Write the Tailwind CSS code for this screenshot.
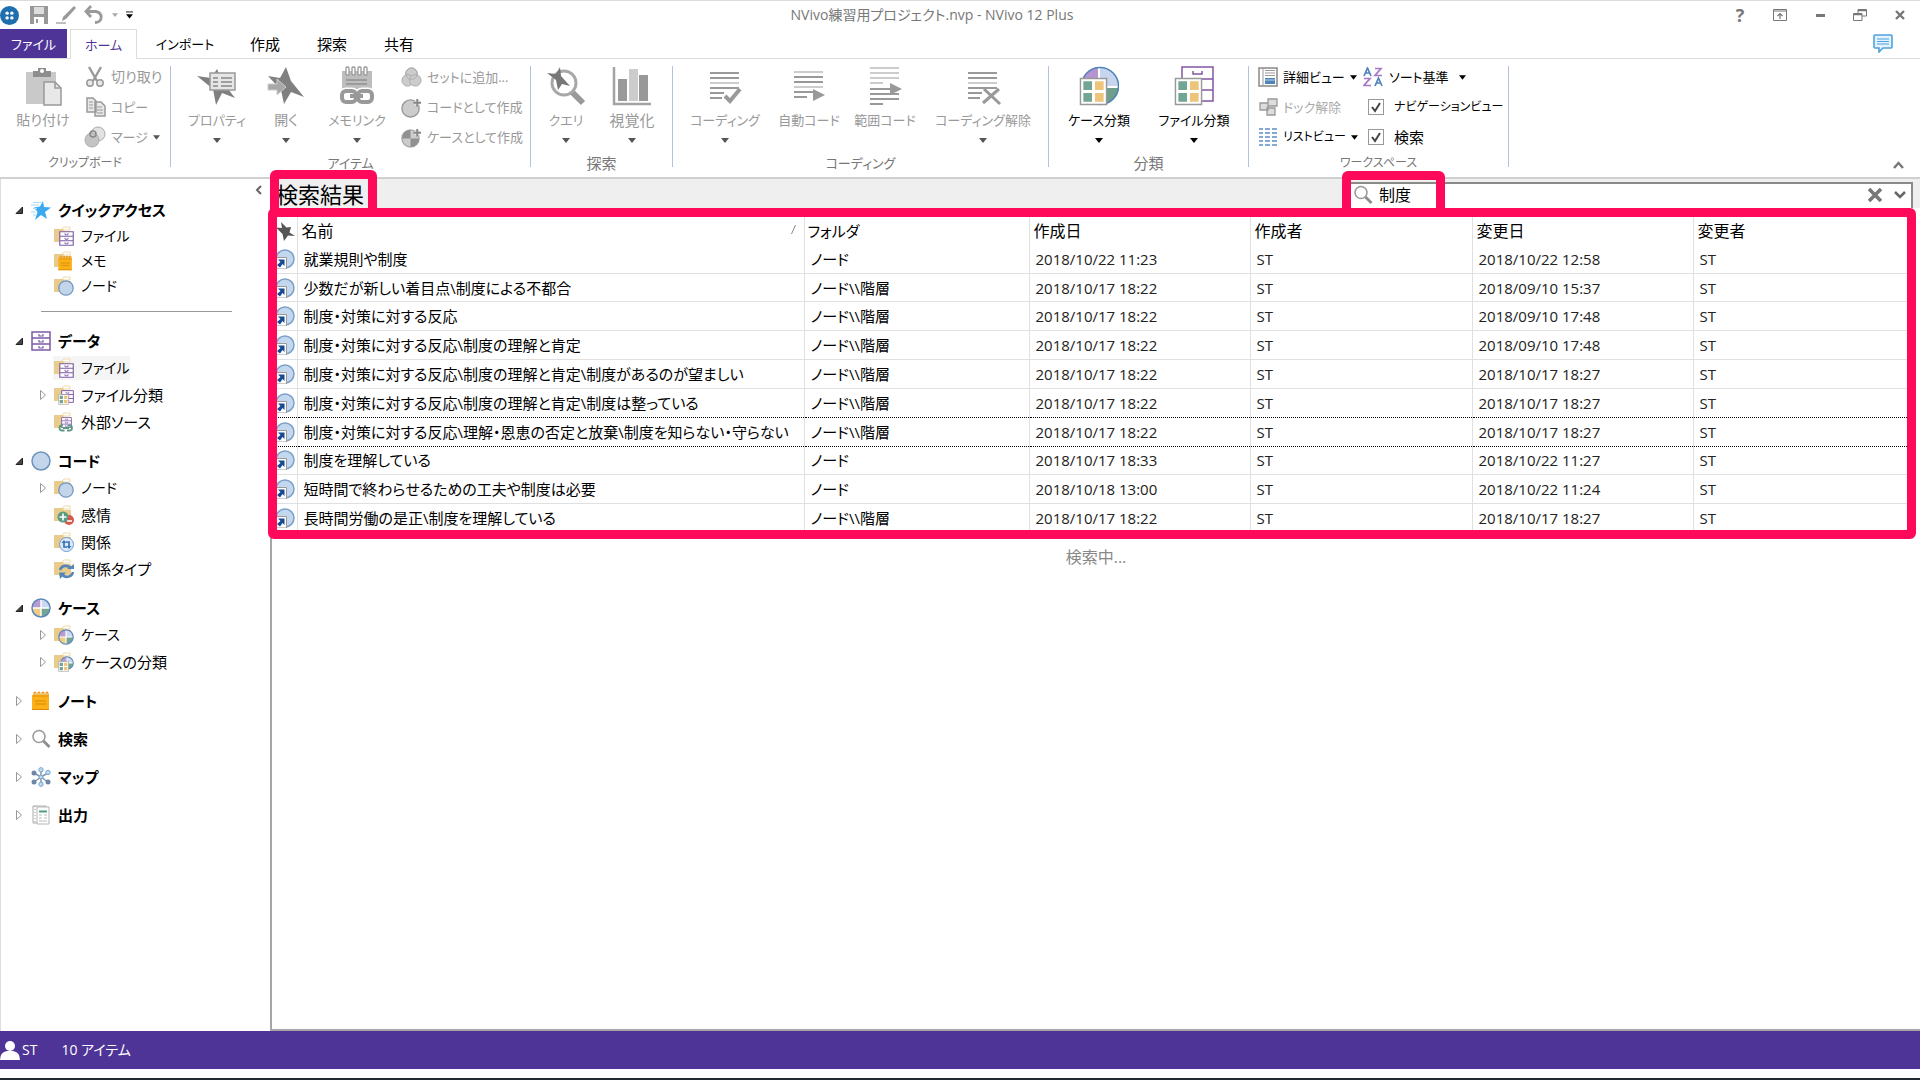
<!DOCTYPE html>
<html lang="ja">

<head>
    <meta charset="UTF-8">
    <meta name="viewport" content="width=device-width, initial-scale=1.0">
    <title>NVivo練習用プロジェクト.nvp - NVivo 12 Plus</title>
    <script src="https://cdn.jsdelivr.net/npm/@tailwindcss/browser@4"></script>
</head>

<body class="h-screen flex flex-col overflow-hidden bg-white text-[15px] leading-5 text-black font-['Open_Sans','Noto_Sans_CJK_JP',sans-serif] [font-feature-settings:'palt'] whitespace-nowrap">
    <!-- icon sprite -->
    <svg class="hidden">
        <symbol id="folder" viewBox="0 0 20 20">
            <path d="M8 3l2-2h6v3h-6z" fill="#fff" stroke="#f0d9a8" />
            <path d="M0 3h9l1 2h7v11H0z" fill="#e9cc8c" />
        </symbol>
        <symbol id="cabinet" viewBox="0 0 20 20">
            <path d="M1 1h18v18H1zM1 7h18M1 13h18" fill="#fff" stroke="#7d5ba6" stroke-width="1.5" />
            <path d="M8 3v2h4V3M8 9v2h4V9M8 15v2h4v-2" fill="none" stroke="#7d5ba6" stroke-width="1.2" />
        </symbol>
        <symbol id="node" viewBox="0 0 20 20">
            <circle cx="10" cy="10" r="9" fill="#c3d5ea" stroke="#6d93bd" stroke-width="1.5" />
        </symbol>
        <symbol id="pie" viewBox="0 0 20 20">
            <circle cx="10" cy="10" r="9" fill="#c9daf0" />
            <path d="M10 10V1a9 9 0 0 0-9 9z" fill="#b99bd3" />
            <path d="M10 10H1a9 9 0 0 0 9 9z" fill="#f0cd84" />
            <path d="M10 10v9a9 9 0 0 0 9-9z" fill="#74a493" />
            <path d="M10 1v18M1 10h18" stroke="#fff" stroke-width="1.4" />
            <circle cx="10" cy="10" r="9" fill="none" stroke="#5b87b8" stroke-width="1.5" />
        </symbol>
        <symbol id="memo" viewBox="0 0 20 20">
            <path d="M1 4h17v15H1z" fill="#fbb117" />
            <path d="M3 6V2q2-2 2 1v3M7 6V2q2-2 2 1v3M11 6V2q2-2 2 1v3M15 6V2q2-2 2 1v3" fill="none" stroke="#e8960c" stroke-width="1.2" />
            <path d="M4 10h11M4 13h11M1 18.500h17" stroke="#d98a06" />
        </symbol>
        <symbol id="grid" viewBox="0 0 20 20">
            <path d="M1 1h18v18H1z" fill="#fff" stroke="#999" />
            <path d="M3 3h6v6H3zM3 11h6v6H3z" fill="#72a594" />
            <path d="M11 3h6v6h-6zM11 11h6v6h-6z" fill="#ecc57b" />
        </symbol>
        <symbol id="lens" viewBox="0 0 20 20">
            <circle cx="8" cy="7.500" r="6" fill="none" stroke="#9b9b9b" stroke-width="1.6" />
            <path d="M12.500 12l6 6" stroke="#8d8d8d" stroke-width="2.8" />
        </symbol>
        <symbol id="f-file" viewBox="0 0 20 20">
            <use href="#folder" /><use href="#cabinet" x="5" y="5" width="15" height="15" />
        </symbol>
        <symbol id="f-memo" viewBox="0 0 20 20">
            <use href="#folder" /><use href="#memo" x="3" y="4" width="17" height="16" />
        </symbol>
        <symbol id="f-node" viewBox="0 0 20 20">
            <use href="#folder" /><use href="#node" x="4" y="4" width="16" height="16" />
        </symbol>
        <symbol id="f-class" viewBox="0 0 20 20">
            <use href="#folder" /><use href="#cabinet" x="7" y="5" width="13" height="13" /><use href="#grid" x="4" y="9" width="11" height="11" />
        </symbol>
        <symbol id="f-ext" viewBox="0 0 20 20">
            <use href="#folder" /><use href="#cabinet" x="6" y="5" width="13" height="11" />
            <path d="M9 13.500h-1a2.500 2.500 0 0 0 0 5h2.500M14 13.500h1.500a2.500 2.500 0 0 1 0 5H13M9 16h6" fill="none" stroke="#5d9a84" stroke-width="1.8" />
        </symbol>
        <symbol id="f-senti" viewBox="0 0 20 20">
            <use href="#folder" />
            <circle cx="15" cy="15" r="5" fill="#d9574a" /><path d="M13 16h5" stroke="#fff" stroke-width="1.6" />
            <circle cx="9" cy="12" r="5.500" fill="#5a9b84" /><path d="M5.500 12h7M9 8.500v7" stroke="#fff" stroke-width="1.6" />
        </symbol>
        <symbol id="f-rel" viewBox="0 0 20 20">
            <use href="#folder" />
            <circle cx="12.500" cy="12.500" r="7" fill="#dce9f7" stroke="#6d9ad0" />
            <path d="M10 9v6h3M15 16v-6h-3" fill="none" stroke="#3674b9" stroke-width="1.7" /><path d="M7.500 11L10 8l2.500 3zM12.500 14l2.500 3 2.500-3z" fill="#3674b9" />
        </symbol>
        <symbol id="f-reltype" viewBox="0 0 20 20">
            <use href="#folder" />
            <path d="M6 11a6 6 0 0 1 11-1M19 13a6 6 0 0 1-11 2" fill="none" stroke="#5585b8" stroke-width="2.6" /><path d="M13 10h7V5zM5 13.500h7L6 20z" fill="#5585b8" />
        </symbol>
        <symbol id="f-case" viewBox="0 0 20 20">
            <use href="#folder" /><use href="#pie" x="4" y="4" width="16" height="16" />
        </symbol>
        <symbol id="f-caseclass" viewBox="0 0 20 20">
            <use href="#folder" /><use href="#pie" x="6" y="4" width="14" height="14" /><use href="#grid" x="4" y="9" width="11" height="11" />
        </symbol>
        <symbol id="star" viewBox="0 0 20 20">
            <path d="M12 1l1 6 7 .500-6 4.500 2 7-6-4-6 5 2.500-8L3 7.500l6-1z" fill="#3aa9ef" />
            <path d="M2 2.500h8M0 5h8M2 8.500h4M0 12h5M2 15h3" stroke="#a5dafa" stroke-width="1.200" />
        </symbol>
        <symbol id="map" viewBox="0 0 20 20">
            <path d="M10 10V3M10 10v7M10 10L3 6M10 10l7-4M10 10l-7 5M10 10l7 5" stroke="#8394aa" stroke-width="1.500" />
            <g fill="#6d86a8"><circle cx="3" cy="6" r="2.500" /><circle cx="3" cy="15" r="2.500" /><circle cx="17" cy="15" r="2.500" /></g>
            <g fill="#b9dcf6" stroke="#7ba5d0"><circle cx="10" cy="2.800" r="2.200" /><circle cx="17" cy="5.500" r="2.200" /><circle cx="10" cy="17.200" r="2.200" /><circle cx="10" cy="10" r="2" /></g>
        </symbol>
        <symbol id="report" viewBox="0 0 20 20">
            <path d="M2 1h13v17H2z" fill="#fff" stroke="#aaa" /><path d="M4 1v17" stroke="#999" stroke-dasharray="1 2" />
            <path d="M6 2h12v17H6z" fill="#fff" stroke="#b5b5b5" /><path d="M8 6.500h8" stroke="#4e9c80" stroke-width="2" />
            <path d="M8 10h3M13 10h3M8 13h3M13 13h3M8 16h8" stroke="#bbb" />
        </symbol>
        <symbol id="shortcut" viewBox="0 0 20 20">
            <circle cx="10" cy="10" r="9" fill="#c3d8ee" stroke="#7ba0c8" stroke-width="1.500" />
            <path d="M0 8.500h11.500V20H0z" fill="#fff" stroke="#999" /><path d="M3 10.500h6.500V17l-2-2-2.500 3.500L2 16l3.500-3z" fill="#174a94" />
        </symbol>
        <symbol id="pin" viewBox="0 0 20 20">
            <path d="M6 1l5.500 5.500L16 6l-1.500 5.500L20 15l-7-.500L9 20l-1.500-7L1 6.500l6 .500z" fill="#555" />
        </symbol>
        <symbol id="down" viewBox="0 0 8 5"><path d="M0 0h8L4 5z" fill="currentColor" /></symbol>
        <symbol id="opened" viewBox="0 0 10 12"><path d="M8.500 3v6.500H2z" fill="#444" stroke="#222" /></symbol>
        <symbol id="closed" viewBox="0 0 10 12"><path d="M2.500 1.500l5 4.500-5 4.500z" fill="#fff" stroke="#999" /></symbol>
    </svg>

    <!-- title bar -->
    <header class="flex h-[29px] shrink-0 items-center border-t border-[#dcdcdc] text-[#777]">
        <div class="flex w-36 items-center text-[#999]">
            <svg class="size-[19px] mr-[11px]" viewBox="0 0 20 20"><circle cx="10" cy="10" r="10" fill="#1d6fae" /><g fill="#fff"><circle cx="7.500" cy="7.500" r="1.800" /><circle cx="12.500" cy="7.500" r="1.800" /><circle cx="7.500" cy="12.500" r="1.800" /><circle cx="12.500" cy="12.500" r="1.800" /></g></svg>
            <button type="button" aria-label="保存" class="mr-2"><svg class="size-[18px]" viewBox="0 0 18 18"><path d="M0 0h18v18H0z" fill="#989898" /><path d="M4 1h10v7H4zM4 11h10v7H4z" fill="#fff" /><path d="M6 13h2v4H6z" fill="#989898" /><path d="M4 1h10v7H4z" fill="#ddd" /></svg></button>
            <button type="button" aria-label="編集" class="mr-2"><svg class="size-5" viewBox="0 0 20 20"><path d="M18 1l2 2L10 14l-4 2 1-4z" fill="#999" /><path d="M0 18h10" stroke="#aaa" stroke-width="1.500" /></svg></button>
            <button type="button" aria-label="元に戻す" class="mr-2"><svg class="size-5" viewBox="0 0 20 20"><path d="M7 1L2 6.500 7 12M2 6.500h10q6 1 5 7-1 4-6 4" fill="none" stroke="#999" stroke-width="2.800" /></svg></button>
            <svg class="w-[6px] h-1 mr-2 text-[#aaa]"><use href="#down" /></svg>
            <svg class="w-[7px] h-2 text-black" viewBox="0 0 8 8"><path d="M0 .500h8" stroke="#000" /><path d="M0 3h8L4 8z" /></svg>
        </div>
        <h1 class="flex-1 text-center text-sm">NVivo練習用プロジェクト.nvp - NVivo 12 Plus</h1>
        <div class="flex">
            <button type="button" class="w-10 font-bold text-lg">?</button>
            <button type="button" aria-label="リボン表示" class="w-10 flex justify-center items-center"><svg class="w-[14px] h-3" viewBox="0 0 14 12" fill="none" stroke="#777"><path d="M.500 .500h13v11H.500zM.500 2h13" /><path d="M7 10V5M4.500 7L7 4.500 9.500 7" stroke-width="1.200" /></svg></button>
            <button type="button" aria-label="最小化" class="w-10 flex justify-center items-center"><svg class="w-[9px] h-[3px]" viewBox="0 0 9 3"><path d="M0 0h9v3H0z" fill="#777" /></svg></button>
            <button type="button" aria-label="元に戻す" class="w-10 flex justify-center items-center"><svg class="w-[14px] h-3" viewBox="0 0 14 12" fill="none" stroke="#777"><path d="M5 4V.500h8.500V7H9M.500 4.500H9v7H.500z" /><path d="M5 1.500h8.500M.500 5.500H9" stroke-width="1.500" /></svg></button>
            <button type="button" aria-label="閉じる" class="w-10 flex justify-center items-center"><svg class="size-[10px]" viewBox="0 0 10 10"><path d="M1 1l8 8M9 1L1 9" stroke="#777" stroke-width="2.400" /></svg></button>
        </div>
    </header>

    <!-- ribbon tabs -->
    <nav class="flex h-[30px] shrink-0 items-stretch border-b border-[#dcdcdc]">
        <button type="button" class="w-[67px] bg-[#4e3496] text-[13px] text-white">ファイル</button>
        <button type="button" class="ml-[3px] w-[67px] h-[30px] border border-b-0 border-[#dcdcdc] bg-white text-[13px] text-[#4e3496]">ホーム</button>
        <button type="button" class="w-24 text-[13px]">インポート</button>
        <button type="button" class="w-16">作成</button>
        <button type="button" class="w-[70px]">探索</button>
        <button type="button" class="w-16">共有</button>
        <button type="button" aria-label="フィードバック" class="ml-auto mr-[27px]"><svg class="w-5 h-[19px]" viewBox="0 0 20 19"><path d="M2 1h16q1 0 1 1v11q0 1-1 1h-8l-4 4v-4H2q-1 0-1-1V2q0-1 1-1z" fill="#e4f2fc" stroke="#4da2dd" stroke-width="1.600" /><path d="M4 5h12M4 7.500h12M4 10h12" stroke="#4da2dd" stroke-width="1.200" /></svg></button>
    </nav>

    <!-- ribbon -->
    <div class="flex h-[120px] shrink-0 items-start border-b-2 border-[#d0d0d0] pt-[7px] text-[13px] leading-5 text-[#999]">
        <section class="flex w-[171px] h-[101px] shrink-0 flex-col border-r border-[#b3c2dd]">
            <div class="flex h-[87px] shrink-0 gap-[9px] pl-[11px]">
                <button type="button" class="flex w-16 shrink-0 flex-col items-center">
                    <svg class="size-10" viewBox="0 0 40 40"><path d="M3 6h30v32H3z" fill="#c9c9c9" /><path d="M10 5h5V2h8v3h5v6H10z" fill="#8e8e8e" /><circle cx="19" cy="5" r="2" fill="#fff" /><path d="M21 16h11l6 6v17H21z" fill="#e8e8e8" stroke="#999" stroke-width="1.500" /><path d="M32 16v6h6" fill="none" stroke="#999" stroke-width="1.500" /></svg>
                    <span class="mt-1 text-sm leading-5">貼り付け</span>
                    <svg class="w-2 h-[5px] mt-2 text-[#555]"><use href="#down" /></svg>
                </button>
                <div class="-mt-1 flex flex-col">
                    <button type="button" class="flex h-[30px] items-center gap-[5px] text-sm"><svg class="size-[22px]" viewBox="0 0 22 22"><path d="M5 1l8 14M17 1L9 15" stroke="#999" stroke-width="2.400" /><g fill="#e8e8e8" stroke="#999" stroke-width="1.500"><circle cx="6" cy="17" r="3.200" /><circle cx="16" cy="17" r="3.200" /></g></svg>切り取り</button>
                    <button type="button" class="flex h-[30px] items-center gap-[5px]"><svg class="size-[22px]" viewBox="0 0 22 22" fill="#e8e8e8" stroke="#999" stroke-width="1.500"><path d="M3 2h6l3 3v11H3zM11 6h6l4 4v10H11z" /><path d="M5 6h4M5 9h4M5 12h4M13 11h5M13 14h6M13 17h6" stroke-width="1" /></svg>コピー</button>
                    <button type="button" class="flex h-[30px] items-center gap-[5px]"><svg class="size-[22px]" viewBox="0 0 22 22" stroke="#aaa"><circle cx="14" cy="8" r="7" fill="#e2e2e2" /><circle cx="8" cy="14" r="7" fill="#c4c4c4" /><circle cx="9" cy="8" r="3" fill="none" stroke="#888" stroke-width="1.500" /></svg>マージ<svg class="w-[7px] h-[5px] text-[#555]"><use href="#down" /></svg></button>
                </div>
            </div>
            <p class="text-center text-xs leading-5 text-[#777]">クリップボード</p>
        </section>
        <section class="flex w-[360px] h-[101px] shrink-0 flex-col border-r border-[#b3c2dd]">
            <div class="flex h-[87px] shrink-0 pl-[11px]">
                <button type="button" class="flex w-[70px] shrink-0 flex-col items-center">
                    <svg class="size-10" viewBox="0 0 40 40"><path d="M20 3l5 12 13 17-13-5-6 12-3-16L0 10l14 2z" fill="#808080" /><path d="M13 7h25v17H13z" fill="#e6e6e6" stroke="#999" stroke-width="1.500" /><path d="M16 12h5M16 16h5M16 20h5M24 12h11M24 16h11M24 20h11" stroke="#888" stroke-width="1.600" /></svg>
                    <span class="mt-1">プロパティ</span>
                    <svg class="w-2 h-[5px] mt-2 text-[#555]"><use href="#down" /></svg>
                </button>
                <button type="button" class="flex w-[68px] shrink-0 flex-col items-center">
                    <svg class="size-10" viewBox="0 0 40 40"><path d="M20 1l5 14 13 16-13-5-7 12-3-14L2 10l12 2z" fill="#808080" /><path d="M2 18h9v-5l9 8-9 8v-5H2z" fill="#a8a8a8" stroke="#ccc" /></svg>
                    <span class="mt-1 text-sm leading-5">開く</span>
                    <svg class="w-2 h-[5px] mt-2 text-[#555]"><use href="#down" /></svg>
                </button>
                <button type="button" class="flex w-[74px] shrink-0 flex-col items-center">
                    <svg class="size-10" viewBox="0 0 40 40"><path d="M5 5h30v23H5z" fill="#bdbdbd" /><g fill="#fff" stroke="#999" stroke-width="1.300"><rect x="9" y="1" width="3" height="8" rx="1" /><rect x="15" y="1" width="3" height="8" rx="1" /><rect x="21" y="1" width="3" height="8" rx="1" /><rect x="27" y="1" width="3" height="8" rx="1" /></g><path d="M9 14h21M9 18h21" stroke="#909090" stroke-width="1.500" /><g fill="none" stroke="#fff" stroke-width="7"><rect x="5" y="25" width="14" height="11" rx="4" /><rect x="21" y="25" width="14" height="11" rx="4" /></g><g fill="none" stroke="#999" stroke-width="4"><rect x="5" y="25" width="14" height="11" rx="4" /><rect x="21" y="25" width="14" height="11" rx="4" /><path d="M13 30h13" /></g></svg>
                    <span class="mt-1">メモリンク</span>
                    <svg class="w-2 h-[5px] mt-2 text-[#555]"><use href="#down" /></svg>
                </button>
                <div class="-mt-1 flex flex-col pl-[7px]">
                    <button type="button" class="flex h-[30px] items-center gap-[5px]"><svg class="size-[21px]" viewBox="0 0 22 22" fill="#ccc" stroke="#aaa"><circle cx="11" cy="7" r="6" /><circle cx="7" cy="14" r="6" /><circle cx="15" cy="14" r="6" /><circle cx="11" cy="7" r="6" fill="none" /></svg>セットに追加...</button>
                    <button type="button" class="flex h-[30px] items-center gap-[5px]"><svg class="size-[21px]" viewBox="0 0 22 22"><circle cx="10" cy="12" r="9" fill="#ccc" stroke="#999" stroke-width="1.500" /><path d="M17 3v6M14 6h6" stroke="#e8e8e8" stroke-width="4" /><path d="M17 2v8M13 6h8" stroke="#888" stroke-width="2" /></svg>コードとして作成</button>
                    <button type="button" class="flex h-[30px] items-center gap-[5px]"><svg class="size-[21px]" viewBox="0 0 22 22"><circle cx="10" cy="12" r="9" fill="#ccc" stroke="#aaa" stroke-width="1.500" /><path d="M10 12h9a9 9 0 0 1-9 9zM10 12V3a9 9 0 0 0-9 9z" fill="#909090" /><path d="M17 3v6M14 6h6" stroke="#e8e8e8" stroke-width="4" /><path d="M17 2v8M13 6h8" stroke="#888" stroke-width="2" /></svg>ケースとして作成</button>
                </div>
            </div>
            <p class="text-center text-[#777]">アイテム</p>
        </section>
        <section class="flex w-[142px] h-[101px] shrink-0 flex-col border-r border-[#b3c2dd]">
            <div class="flex h-[87px] shrink-0 pl-[5px]">
                <button type="button" class="flex w-[60px] shrink-0 flex-col items-center">
                    <svg class="size-10" viewBox="0 0 40 40"><path d="M26 26l11 11" stroke="#999" stroke-width="6" /><circle cx="18" cy="17" r="12" fill="#fff" stroke="#a8a8a8" stroke-width="3" /><path d="M14 1l1 9 9 10-8-2-4 6-2-10-9-7 9 1z" fill="#777" /></svg>
                    <span class="mt-1">クエリ</span>
                    <svg class="w-2 h-[5px] mt-2 text-[#555]"><use href="#down" /></svg>
                </button>
                <button type="button" class="flex w-[72px] shrink-0 flex-col items-center">
                    <svg class="size-10" viewBox="0 0 40 40"><path d="M2 1v37h37" fill="none" stroke="#a3a3a3" stroke-width="2.500" /><path d="M6 13h9v22H6zM27 9h9v26h-9z" fill="#999" /><path d="M17 3h9v32h-9z" fill="#ccc" /></svg>
                    <span class="mt-1 text-[15px]">視覚化</span>
                    <svg class="w-2 h-[5px] mt-2 text-[#555]"><use href="#down" /></svg>
                </button>
            </div>
            <p class="text-center text-[15px] text-[#777]">探索</p>
        </section>
        <section class="flex w-[376px] h-[101px] shrink-0 flex-col border-r border-[#b3c2dd]">
            <div class="flex h-[87px] shrink-0 pl-3">
                <button type="button" class="flex w-20 shrink-0 flex-col items-center">
                    <svg class="size-10" viewBox="0 0 40 40" fill="none" stroke="#999" stroke-width="2"><path d="M5 7h29M5 12h29M5 22h29M5 27h14M5 32h12" /><path d="M5 17h29" stroke="#ccc" /><path d="M20 30l5 5 10-12" stroke-width="4" /></svg>
                    <span class="mt-1">コーディング</span>
                    <svg class="w-2 h-[5px] mt-2 text-[#555]"><use href="#down" /></svg>
                </button>
                <button type="button" class="flex w-[88px] shrink-0 flex-col items-center">
                    <svg class="size-10" viewBox="0 0 40 40" fill="none" stroke="#999" stroke-width="2"><path d="M5 11h29M5 16h29M5 26h19M5 31h13" /><path d="M5 6h29M5 21h29" stroke="#ccc" /><path d="M24 23l12 6-12 6z" fill="#999" stroke="none" /></svg>
                    <span class="mt-1">自動コード</span>
                </button>
                <button type="button" class="flex w-16 shrink-0 flex-col items-center">
                    <svg class="size-10" viewBox="0 0 40 40" fill="none" stroke="#999" stroke-width="2"><path d="M5 23h20M5 28h29M5 33h29M5 38h13" /><path d="M5 2h29M5 7h29M5 12h29M5 17h13" stroke="#ccc" /><path d="M25 17l12 6-12 6z" fill="#999" stroke="none" /></svg>
                    <span class="mt-1">範囲コード</span>
                </button>
                <button type="button" class="flex w-[132px] shrink-0 flex-col items-center">
                    <svg class="size-10" viewBox="0 0 40 40" fill="none" stroke="#999" stroke-width="2"><path d="M5 7h29M5 12h29M5 22h29M5 27h14M5 32h12" /><path d="M5 17h29" stroke="#ccc" /><path d="M21 23l16 15M36 23L20 37" stroke-width="3" /></svg>
                    <span class="mt-1">コーディング解除</span>
                    <svg class="w-2 h-[5px] mt-2 text-[#555]"><use href="#down" /></svg>
                </button>
            </div>
            <p class="text-center text-[#777]">コーディング</p>
        </section>
        <section class="flex w-[200px] h-[101px] shrink-0 flex-col border-r border-[#b3c2dd] text-black">
            <div class="flex h-[87px] shrink-0 pl-2">
                <button type="button" class="flex w-[84px] shrink-0 flex-col items-center">
                    <svg class="size-10" viewBox="0 0 40 40"><circle cx="21" cy="20" r="19" fill="#c6d6ee" /><path d="M20 20V1A19 19 0 0 0 2 20z" fill="#b594d0" /><path d="M21 20h19a19 19 0 0 1-13 18z" fill="#6f9f8c" /><path d="M20 1v20h20" fill="none" stroke="#fff" stroke-width="2" /><circle cx="21" cy="20" r="18.500" fill="none" stroke="#4f83ba" stroke-width="1.500" /><use href="#grid" y="11" width="29" height="29" /></svg>
                    <span class="mt-1">ケース分類</span>
                    <svg class="w-2 h-[5px] mt-2"><use href="#down" /></svg>
                </button>
                <button type="button" class="flex w-[106px] shrink-0 flex-col items-center">
                    <svg class="size-10" viewBox="0 0 40 40"><path d="M8 1h31v34H8zM8 13h31M8 24h31" fill="#fff" stroke="#8456a3" stroke-width="1.500" /><path d="M19 5v3h9V5" fill="none" stroke="#8456a3" stroke-width="1.500" /><use href="#grid" y="11" width="29" height="29" /></svg>
                    <span class="mt-1">ファイル分類</span>
                    <svg class="w-2 h-[5px] mt-2"><use href="#down" /></svg>
                </button>
            </div>
            <p class="text-center text-[15px] text-[#777]">分類</p>
        </section>
        <section class="flex w-[260px] h-[101px] shrink-0 flex-col border-r border-[#b3c2dd] text-black">
            <div class="flex h-[87px] shrink-0 pl-[9px]">
                <div class="-mt-1 flex w-[105px] shrink-0 flex-col">
                    <button type="button" class="flex h-[30px] items-center gap-[5px]"><svg class="size-5 shrink-0" viewBox="0 0 20 20"><path d="M1 1h18v18H1z" fill="#fff" stroke="#888" stroke-width="1.500" /><path d="M5 1v18M7 3.500h10M7 6h10M7 8.500h10" stroke="#999" /><path d="M7 11h10v6H7z" fill="#4f83ba" /><path d="M7 13h10" stroke="#bcd3ec" /></svg>詳細ビュー<svg class="w-[7px] h-[5px] shrink-0 text-black"><use href="#down" /></svg></button>
                    <button type="button" class="flex h-[30px] items-center gap-[5px] text-[#aaa]"><svg class="size-5 shrink-0" viewBox="0 0 20 20" fill="#ddd" stroke="#999"><path d="M10 2h9v7h-9zM2 6h8v7H2zM9 11h8v7H9z" stroke-width="1.300" /></svg>ドック解除</button>
                    <button type="button" class="flex h-[30px] items-center gap-[5px] text-xs"><svg class="size-5 shrink-0" viewBox="0 0 20 20" stroke="#5b8fc8" stroke-width="1.500"><path d="M1 2h4M1 6h4M1 10h4M1 14h4M1 18h4M7 2h5M7 6h5M7 10h5M7 14h5M7 18h5M14 2h5M14 6h5M14 10h5M14 14h5M14 18h5" /></svg>リストビュー<svg class="w-[7px] h-[5px] shrink-0 text-black"><use href="#down" /></svg></button>
                </div>
                <div class="-mt-1 flex flex-col">
                    <button type="button" class="flex h-[30px] items-center gap-[6px]"><svg class="size-5 shrink-0" viewBox="0 0 20 20" fill="none" stroke-width="1.700"><path d="M1 9l3.500-8L8 9M2.500 6h4M12 19l3.500-8 3.500 8M13.500 16h4" stroke="#4f83ba" /><path d="M12 1.500h6l-6 7h7M1 11.500h6l-6 7h7" stroke="#a678c8" /></svg>ソート基準<svg class="w-[7px] h-[5px] ml-1 text-black"><use href="#down" /></svg></button>
                    <label class="flex h-[30px] items-center gap-[10px] pl-[5px] text-xs"><span class="grid size-4"><input type="checkbox" checked class="appearance-none size-4 border border-[#999] bg-white [grid-area:1/1]"><svg class="size-4 [grid-area:1/1] pointer-events-none" viewBox="0 0 16 16"><path d="M4 8l3 4 5-8" fill="none" stroke="#444" stroke-width="2" /></svg></span>ナビゲーションビュー</label>
                    <label class="flex h-[30px] items-center gap-[10px] pl-[5px] text-[15px]"><span class="grid size-4"><input type="checkbox" checked class="appearance-none size-4 border border-[#999] bg-white [grid-area:1/1]"><svg class="size-4 [grid-area:1/1] pointer-events-none" viewBox="0 0 16 16"><path d="M4 8l3 4 5-8" fill="none" stroke="#444" stroke-width="2" /></svg></span>検索</label>
                </div>
            </div>
            <p class="text-center text-xs leading-5 text-[#777]">ワークスペース</p>
        </section>
        <button type="button" aria-label="リボンを折りたたむ" class="ml-auto mr-4 self-end pb-2"><svg class="w-[11px] h-2" viewBox="0 0 11 8"><path d="M1 7l4.500-5L10 7" fill="none" stroke="#777" stroke-width="2.400" /></svg></button>
    </div>

    <div class="flex flex-1 min-h-0">
        <!-- navigation view -->
        <aside class="relative w-[270px] shrink-0 border-l border-[#ddd] pt-[18px] pl-[13px]">
            <button type="button" aria-label="閉じる" class="absolute right-2 top-[6px]"><svg class="w-[7px] h-[10px]" viewBox="0 0 7 10"><path d="M6 1L2 5l4 4" fill="none" stroke="#666" stroke-width="2" /></svg></button>
            <nav id="navTree"></nav>
        </aside>

        <!-- search results -->
        <main class="relative flex flex-1 min-w-0 flex-col border-l-2 border-b-2 border-[#a6a6a6]">
            <div class="flex h-[29px] shrink-0 items-center bg-[#efefef] pl-1 pr-[7px]">
                <h2 class="flex-1 text-[22px]">検索結果</h2>
                <div class="flex h-[26px] w-[565px] self-end items-center border-2 border-b-0 border-[#8a8a8a] bg-white pb-[2px] pl-[3px] pr-[5px]">
                    <svg class="size-5"><use href="#lens" /></svg>
                    <input type="text" value="制度" aria-label="検索" class="ml-[6px] flex-1 outline-none text-base">
                    <button type="button" aria-label="クリア" class="mr-3"><svg class="size-[14px]" viewBox="0 0 14 14"><path d="M1 1l12 12M13 1L1 13" stroke="#777" stroke-width="3.600" /></svg></button>
                    <button type="button" aria-label="オプション"><svg class="w-3 h-2" viewBox="0 0 12 8"><path d="M1 1l5 5 5-5" fill="none" stroke="#666" stroke-width="2.500" /></svg></button>
                </div>
            </div>
            <table class="mt-[8px] mr-[11px] h-[317px] shrink-0 table-fixed border-collapse text-left">
                <colgroup><col class="w-[25px]"><col class="w-[507px]"><col class="w-[225px]"><col class="w-[221px]"><col class="w-[222px]"><col class="w-[221px]"><col></colgroup>
                <thead>
                    <tr class="h-[29px] text-base leading-5">
                        <th class="p-0"><svg class="size-5 ml-[3px]"><use href="#pin" /></svg></th>
                        <th class="border-l border-[#e0e0e0] py-0 pl-1 pr-2 font-normal"><div class="flex justify-between">名前<svg class="w-[5px] h-[9px] mt-1" viewBox="0 0 5 9"><path d="M.500 9l4-9" stroke="#888" /></svg></div></th>
                        <th class="border-l border-[#e0e0e0] py-0 pl-[3px] text-[15px] font-normal">フォルダ</th>
                        <th class="border-l border-[#e0e0e0] py-0 pl-1 font-normal">作成日</th>
                        <th class="border-l border-[#e0e0e0] py-0 pl-1 font-normal">作成者</th>
                        <th class="border-l border-[#e0e0e0] py-0 pl-1 font-normal">変更日</th>
                        <th class="border-l border-[#e0e0e0] py-0 pl-1 font-normal">変更者</th>
                    </tr>
                </thead>
                <tbody id="resultRows"></tbody>
            </table>
            <p class="mt-3 text-center text-base text-[#888]">検索中...</p>

            <!-- highlight frames -->
            <div class="absolute -left-[2px] -top-[9px] h-[47px] w-[107px] rounded-md border-[9px] border-[#ff0a5a] pointer-events-none"></div>
            <div class="absolute right-[475px] -top-[8px] h-[46px] w-[103px] rounded-md border-[9px] border-[#ff0a5a] pointer-events-none"></div>
            <div class="absolute -left-1 right-1 top-[29px] h-[331px] rounded-md border-[9px] border-[#ff0a5a] pointer-events-none"></div>
        </main>
    </div>

    <!-- status bar -->
    <footer class="shrink-0">
        <div class="flex h-[38px] items-center bg-[#4e3496] text-sm text-white">
            <svg class="size-5 mr-[2px]" viewBox="0 0 20 20"><circle cx="10" cy="6" r="5" fill="#fff" /><path d="M0 20q0-8 7-9h6q7 1 7 9z" fill="#fff" /></svg>
            <span class="mr-6">ST</span>
            <span>10 アイテム</span>
        </div>
        <div class="h-[11px] border-b-2 border-[#1f2733] bg-[#fbfcff]"></div>
    </footer>

    <script>
        const sections = [
            { name: 'クイックアクセス', icon: 'star', open: true, divider: true, items: [['ファイル', 'f-file'], ['メモ', 'f-memo'], ['ノード', 'f-node']] },
            { name: 'データ', icon: 'cabinet', open: true, items: [['ファイル', 'f-file', false, true], ['ファイル分類', 'f-class', true], ['外部ソース', 'f-ext']] },
            { name: 'コード', icon: 'node', open: true, items: [['ノード', 'f-node', true], ['感情', 'f-senti'], ['関係', 'f-rel'], ['関係タイプ', 'f-reltype']] },
            { name: 'ケース', icon: 'pie', open: true, items: [['ケース', 'f-case', true], ['ケースの分類', 'f-caseclass', true]] },
            { name: 'ノート', icon: 'memo', items: [] },
            { name: '検索', icon: 'lens', items: [] },
            { name: 'マップ', icon: 'map', items: [] },
            { name: '出力', icon: 'report', items: [] },
        ]
        const hasKanji = text => /[一-龠]/.test(text)
        document.getElementById('navTree').innerHTML = sections.map(s => `
            <div class="${s.divider ? 'mb-4' : s.open ? 'mb-[13px]' : 'mb-3'}">
                <button type="button" class="flex h-[26px] items-center font-bold">
                    <svg class="w-[10px] h-3 mr-[7px]"><use href="#${s.open ? 'opened' : 'closed'}" /></svg>
                    <svg class="size-5 mr-[7px]"><use href="#${s.icon}" /></svg>${s.name}
                </button>
                ${s.items.map(([name, icon, more, active]) => `
                <div class="flex ${s.divider ? 'h-[25px]' : 'h-[27px]'} items-center pl-6">
                    <svg class="w-[10px] h-3 mr-[5px] ${more ? '' : 'invisible'}"><use href="#closed" /></svg>
                    <button type="button" class="flex h-6 items-center gap-[7px] px-px ${hasKanji(name) ? 'text-[15px]' : 'text-sm'} ${active ? 'bg-[#f5f5f5]' : ''}"><svg class="size-5"><use href="#${icon}" /></svg>${name}</button>
                </div>`).join('')}
                ${s.divider ? '<hr class="mt-[13px] ml-[27px] w-[191px] border-[#999]">' : ''}
            </div>`).join('')

        const results = [
            ['就業規則や制度', 'ノード', '2018/10/22 11:23', '2018/10/22 12:58'],
            ['少数だが新しい着目点\\制度による不都合', 'ノード\\\\階層', '2018/10/17 18:22', '2018/09/10 15:37'],
            ['制度・対策に対する反応', 'ノード\\\\階層', '2018/10/17 18:22', '2018/09/10 17:48'],
            ['制度・対策に対する反応\\制度の理解と肯定', 'ノード\\\\階層', '2018/10/17 18:22', '2018/09/10 17:48'],
            ['制度・対策に対する反応\\制度の理解と肯定\\制度があるのが望ましい', 'ノード\\\\階層', '2018/10/17 18:22', '2018/10/17 18:27'],
            ['制度・対策に対する反応\\制度の理解と肯定\\制度は整っている', 'ノード\\\\階層', '2018/10/17 18:22', '2018/10/17 18:27'],
            ['制度・対策に対する反応\\理解・恩恵の否定と放棄\\制度を知らない・守らない', 'ノード\\\\階層', '2018/10/17 18:22', '2018/10/17 18:27'],
            ['制度を理解している', 'ノード', '2018/10/17 18:33', '2018/10/22 11:27'],
            ['短時間で終わらせるための工夫や制度は必要', 'ノード', '2018/10/18 13:00', '2018/10/22 11:24'],
            ['長時間労働の是正\\制度を理解している', 'ノード\\\\階層', '2018/10/17 18:22', '2018/10/17 18:27'],
        ]
        const focused = 6
        document.getElementById('resultRows').innerHTML = results.map(([name, folder, created, changed], i) => `
            <tr class="${i === focused ? 'border-y border-dotted border-black' : i === focused - 1 ? '' : 'border-b border-[#e0e0e0]'}">
                <td class="p-0"><svg class="size-5 ml-[3px]"><use href="#shortcut" /></svg></td>
                <td class="border-l border-l-[#e0e0e0] py-0 pl-[6px]">${name}</td>
                <td class="border-l border-l-[#e0e0e0] py-0 pl-[6px]">${folder}</td>
                <td class="border-l border-l-[#e0e0e0] py-0 pl-[6px] text-[#222]">${created}</td>
                <td class="border-l border-l-[#e0e0e0] py-0 pl-[6px] text-[#222]">ST</td>
                <td class="border-l border-l-[#e0e0e0] py-0 pl-[6px] text-[#222]">${changed}</td>
                <td class="border-l border-l-[#e0e0e0] py-0 pl-[6px] text-[#222]">ST</td>
            </tr>`).join('')
    </script>
</body>

</html>
